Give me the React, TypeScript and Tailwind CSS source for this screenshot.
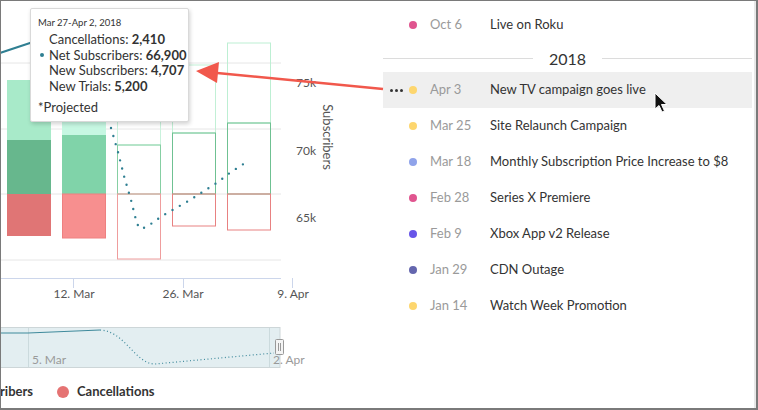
import React from 'react';

type Item = { date: string; title: string; color: string; active?: boolean };

const EVENTS: Item[] = [
  { date: 'Apr 3', title: 'New TV campaign goes live', color: '#fdd66e', active: true },
  { date: 'Mar 25', title: 'Site Relaunch Campaign', color: '#fdd66e' },
  { date: 'Mar 18', title: 'Monthly Subscription Price Increase to $8', color: '#8fa3ea' },
  { date: 'Feb 28', title: 'Series X Premiere', color: '#e0558f' },
  { date: 'Feb 9', title: 'Xbox App v2 Release', color: '#6755e8' },
  { date: 'Jan 29', title: 'CDN Outage', color: '#6466ae' },
  { date: 'Jan 14', title: 'Watch Week Promotion', color: '#fdd66e' },
];

const TEAL = '#2f7f92';

const Row: React.FC<{ item: Item }> = ({ item }) => (
  <div className={`flex items-center h-9 pl-[7px] ${item.active ? 'bg-[#efefef]' : ''}`}>
    <div className="w-[19px] flex items-center gap-[2px]">
      {item.active && (
        <>
          <span className="w-[3px] h-[3px] rounded-full bg-[#333]" />
          <span className="w-[3px] h-[3px] rounded-full bg-[#333]" />
          <span className="w-[3px] h-[3px] rounded-full bg-[#333]" />
        </>
      )}
    </div>
    <span className="w-2 h-2 rounded-full" style={{ backgroundColor: item.color }} />
    <span className="ml-[13px] w-[60px] text-[13px] text-[#9a9a9a]">{item.date}</span>
    <span className="text-[13px] text-[#333]">{item.title}</span>
  </div>
);

const Chart: React.FC = () => (
  <svg width="382" height="375" viewBox="1 1 382 375" className="block">
    {/* grid */}
    {[63, 129, 194, 260].map((y) => (
      <line key={y} x1="0" x2="281" y1={y} y2={y} stroke="#e6e6e6" strokeWidth="1" />
    ))}

    {/* bar 1 */}
    <rect x="7" y="80" width="44" height="60" fill="#a8eac9" />
    <rect x="7" y="140" width="44" height="54" fill="#67b78d" />
    <rect x="7" y="194" width="44" height="42" fill="#e07575" />
    {/* bar 2 */}
    <rect x="62" y="65" width="44" height="70" fill="#c6f7e2" />
    <rect x="62" y="135" width="44" height="59" fill="#80d3a9" />
    <rect x="62.5" y="194" width="43" height="44" fill="#f78f8f" stroke="#ee8080" />
    {/* bar 3 */}
    <rect x="117.5" y="65" width="43" height="80" fill="none" stroke="#c9f2dc" />
    <rect x="117.5" y="145" width="43" height="49" fill="none" stroke="#86cfa3" />
    <rect x="117.5" y="194" width="43" height="65" fill="none" stroke="#ef9d9d" />
    {/* bar 4 */}
    <rect x="172.5" y="65" width="43" height="68" fill="none" stroke="#c2f0d6" />
    <rect x="172.5" y="133" width="43" height="61" fill="none" stroke="#6fc192" />
    <rect x="172.5" y="194" width="43" height="32" fill="none" stroke="#e88181" />
    {/* bar 5 */}
    <rect x="227.5" y="43" width="43" height="80" fill="none" stroke="#bdefd3" />
    <rect x="227.5" y="123" width="43" height="71" fill="none" stroke="#6fc192" />
    <rect x="227.5" y="194" width="43" height="36" fill="none" stroke="#e88181" />

    {/* net subscribers */}
    <path d="M0,53 L30,43 L70,30 L100,70 L110,121" fill="none" stroke={TEAL} strokeWidth="2" />
    <polyline
      points="111,128 118,152 124,176 131,200 137,224 141,229 148,226 162,216 176,208 190,200 204,191 218,182 231,172 245,163"
      fill="none"
      stroke={TEAL}
      strokeWidth="2.4"
      strokeLinecap="round"
      strokeDasharray="0 8.4"
    />

    {/* x axis */}
    <line x1="0" x2="281" y1="278.5" y2="278.5" stroke="#ccd6eb" />
    {[73, 183, 292].map((x) => (
      <line key={x} x1={x + 0.5} x2={x + 0.5} y1="278" y2="288" stroke="#ccd6eb" />
    ))}
    <g fontSize="12" fill="#555" textAnchor="middle" fontFamily="Lato, sans-serif">
      <text x="74" y="298">12. Mar</text>
      <text x="183" y="298">26. Mar</text>
      <text x="293" y="298">9. Apr</text>
    </g>

    {/* y axis */}
    <g fontSize="12" fill="#555" fontFamily="Lato, sans-serif">
      <text x="296" y="87">75k</text>
      <text x="296" y="155">70k</text>
      <text x="296" y="222">65k</text>
      <text
        x="327.5"
        y="137"
        fontSize="13"
        textAnchor="middle"
        dominantBaseline="central"
        transform="rotate(90 327.5 137)"
      >
        Subscribers
      </text>
    </g>

    {/* navigator */}
    <rect x="0" y="327.5" width="280" height="40" fill="#e3eef1" stroke="#cdd6d8" />
    <line x1="28.5" x2="28.5" y1="328" y2="367" stroke="#cbdadd" />
    <line x1="269.5" x2="269.5" y1="328" y2="367" stroke="#cbdadd" />
    <path d="M0,333 L28,333 L100,330" fill="none" stroke="#3f8a9c" strokeWidth="1.2" />
    <path
      d="M100,330 C125,331 135,364 155,364 L274,353"
      fill="none"
      stroke="#3f8a9c"
      strokeWidth="1.2"
      strokeDasharray="1 2.5"
    />
    <g fontSize="12" fill="#9a9a9a" fontFamily="Lato, sans-serif">
      <text x="32" y="364">5. Mar</text>
      <text x="273" y="364">2. Apr</text>
    </g>
    <rect x="275.5" y="339.5" width="8" height="15" rx="1" fill="#f4f4f4" stroke="#999" />
    <line x1="278.5" x2="278.5" y1="343" y2="351" stroke="#999" />
    <line x1="280.5" x2="280.5" y1="343" y2="351" stroke="#999" />
  </svg>
);

export default function App() {
  return (
    <div className="relative w-[758px] h-[410px] flex bg-white border-l border-t border-r-2 border-b-2 border-[#7a7a7a] overflow-hidden font-['Lato',sans-serif] text-[#333]">
      {/* chart side */}
      <div className="w-[382px] flex flex-col">
        <Chart />
        <div className="h-[32px] flex items-center text-[13px] font-bold text-[#333]">
          <div className="w-[32px] overflow-hidden flex justify-end">
            <span className="whitespace-nowrap">Net Subscribers</span>
          </div>
          <span className="ml-[24px] w-3 h-3 rounded-full bg-[#e57373]" />
          <span className="ml-[8px]">Cancellations</span>
        </div>
      </div>

      {/* annotations side */}
      <div className="flex-1 flex flex-col pt-[6px] pr-[2px] border-r-2 border-[#e8e8e8]">
        <Row item={{ date: 'Oct 6', title: 'Live on Roku', color: '#e0558f' }} />
        <div className="h-[29px] flex items-center pt-[2px]">
          <div className="flex-1 h-px bg-[#dcdcdc]" />
          <span className="mx-[16px] text-[16px] text-[#333]">2018</span>
          <div className="flex-1 h-px bg-[#dcdcdc]" />
        </div>
        {EVENTS.map((e) => (
          <Row key={e.date} item={e} />
        ))}
      </div>

      {/* tooltip */}
      <div className="absolute left-[29px] top-[7px] w-[159px] h-[114px] bg-white border border-[#d9d9d9] rounded-[2px] shadow-[1px_2px_4px_rgba(0,0,0,0.18)] pt-[7px] pl-[7px] text-[#333]">
        <div className="text-[9.5px] leading-[14px]">Mar 27-Apr 2, 2018</div>
        <div className="mt-[2px] text-[13px] leading-[15.5px]">
          <div className="pl-[11px]">
            Cancellations: <b>2,410</b>
          </div>
          <div className="flex items-center">
            <span className="w-[11px] flex">
              <span className="ml-[2px] w-[4px] h-[4px] rounded-full bg-[#2f7f92]" />
            </span>
            <span>
              Net Subscribers: <b>66,900</b>
            </span>
          </div>
          <div className="pl-[11px]">
            New Subscribers: <b>4,707</b>
          </div>
          <div className="pl-[11px]">
            New Trials: <b>5,200</b>
          </div>
        </div>
        <div className="mt-[6px] text-[13px] leading-[15px]">*Projected</div>
      </div>

      {/* annotation arrow + cursor */}
      <svg className="absolute left-[-1px] top-[-1px] pointer-events-none" width="758" height="410" viewBox="0 0 758 410">
        <line x1="212" y1="72.5" x2="383" y2="89" stroke="#f1584c" strokeWidth="2.6" />
        <polygon points="196,71 219,62 217,83" fill="#f1584c" />
        <path
          d="M655,93 L655,109 L659,105.5 L662,112 L664.5,111 L661.5,104.5 L667,104.5 Z"
          fill="#111"
          stroke="#fff"
          strokeWidth="1"
          strokeLinejoin="round"
        />
      </svg>
    </div>
  );
}
